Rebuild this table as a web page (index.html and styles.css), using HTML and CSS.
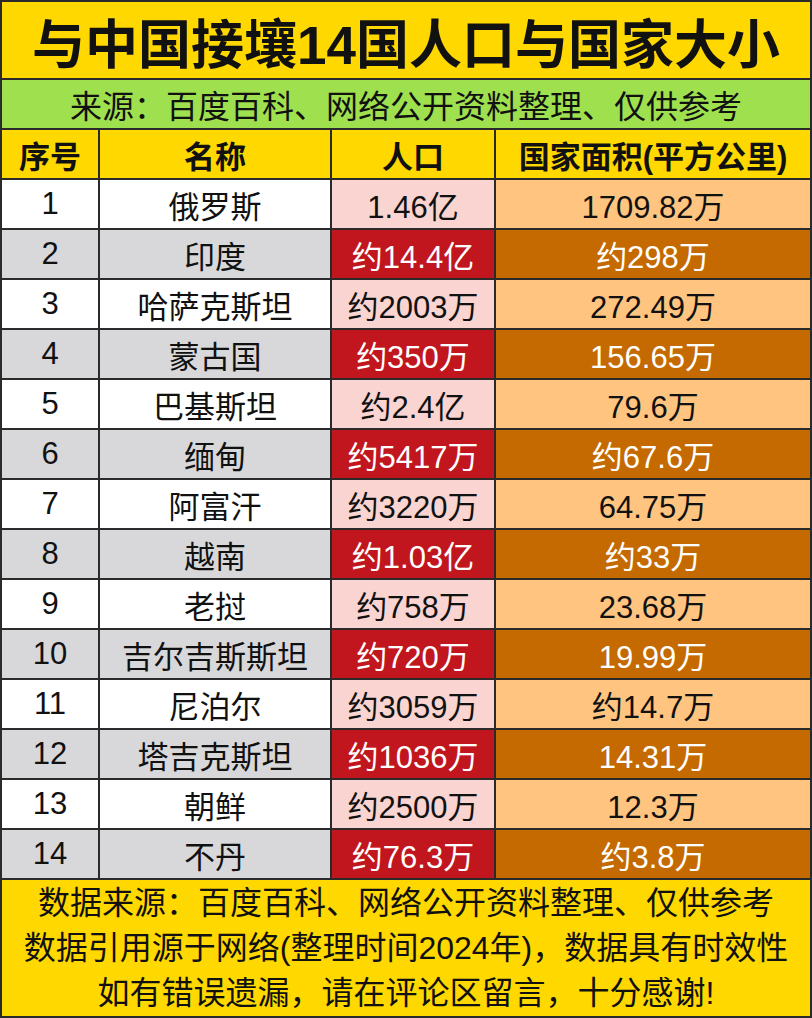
FILE: index.html
```html
<!DOCTYPE html>
<html lang="zh-CN">
<head>
<meta charset="utf-8">
<title>与中国接壤14国人口与国家大小</title>
<link rel="stylesheet" href="styles.css">
</head>
<body>
<div class="sheet">
  <div class="title">与中国接壤14国人口与国家大小</div>
  <div class="source">来源：百度百科、网络公开资料整理、仅供参考</div>
  <div class="table">
    <div class="cell head">序号</div>
    <div class="cell head">名称</div>
    <div class="cell head">人口</div>
    <div class="cell head">国家面积(平方公里)</div>

    <div class="cell no">1</div><div class="cell name">俄罗斯</div><div class="cell pop">1.46亿</div><div class="cell area">1709.82万</div>
    <div class="cell no alt">2</div><div class="cell name alt">印度</div><div class="cell pop alt">约14.4亿</div><div class="cell area alt">约298万</div>
    <div class="cell no">3</div><div class="cell name">哈萨克斯坦</div><div class="cell pop">约2003万</div><div class="cell area">272.49万</div>
    <div class="cell no alt">4</div><div class="cell name alt">蒙古国</div><div class="cell pop alt">约350万</div><div class="cell area alt">156.65万</div>
    <div class="cell no">5</div><div class="cell name">巴基斯坦</div><div class="cell pop">约2.4亿</div><div class="cell area">79.6万</div>
    <div class="cell no alt">6</div><div class="cell name alt">缅甸</div><div class="cell pop alt">约5417万</div><div class="cell area alt">约67.6万</div>
    <div class="cell no">7</div><div class="cell name">阿富汗</div><div class="cell pop">约3220万</div><div class="cell area">64.75万</div>
    <div class="cell no alt">8</div><div class="cell name alt">越南</div><div class="cell pop alt">约1.03亿</div><div class="cell area alt">约33万</div>
    <div class="cell no">9</div><div class="cell name">老挝</div><div class="cell pop">约758万</div><div class="cell area">23.68万</div>
    <div class="cell no alt">10</div><div class="cell name alt">吉尔吉斯斯坦</div><div class="cell pop alt">约720万</div><div class="cell area alt">19.99万</div>
    <div class="cell no">11</div><div class="cell name">尼泊尔</div><div class="cell pop">约3059万</div><div class="cell area">约14.7万</div>
    <div class="cell no alt">12</div><div class="cell name alt">塔吉克斯坦</div><div class="cell pop alt">约1036万</div><div class="cell area alt">14.31万</div>
    <div class="cell no">13</div><div class="cell name">朝鲜</div><div class="cell pop">约2500万</div><div class="cell area">12.3万</div>
    <div class="cell no alt">14</div><div class="cell name alt">不丹</div><div class="cell pop alt">约76.3万</div><div class="cell area alt">约3.8万</div>
  </div>
  <div class="footer">
    <p>数据来源：百度百科、网络公开资料整理、仅供参考</p>
    <p>数据引用源于网络(整理时间2024年)，数据具有时效性</p>
    <p>如有错误遗漏，请在评论区留言，十分感谢!</p>
  </div>
</div>
</body>
</html>
```
FILE: styles.css
```css
html, body {
  margin: 0;
  padding: 0;
  background: #2a2a2a;
}

.sheet {
  width: 812px;
  height: 1018px;
  box-sizing: border-box;
  padding: 2px;
  background: #2a2a2a;
  display: flex;
  flex-direction: column;
  gap: 2px;
  font-family: "Liberation Sans", "Noto Sans CJK SC", sans-serif;
  color: #111;
}

.title {
  height: 76px;
  background: #ffd800;
  display: flex;
  align-items: center;
  justify-content: center;
  font-size: 53px;
  font-weight: 700;
  padding-top: 2px;
  box-sizing: border-box;
}

.source {
  height: 48px;
  background: #9fe04f;
  display: flex;
  align-items: center;
  justify-content: center;
  font-size: 32px;
}

.table {
  display: grid;
  grid-template-columns: 96px 230px 162px 314px;
  grid-auto-rows: 48px;
  gap: 2px;
}

.cell {
  display: flex;
  align-items: center;
  justify-content: center;
  font-size: 31px;
  white-space: nowrap;
}

.head {
  background: #ffd800;
  font-weight: 700;
}

.no, .name { background: #ffffff; }
.pop { background: #f9d4d0; }
.area { background: #ffc47f; }

.no.alt, .name.alt { background: #d8d8da; }
.pop.alt { background: #c1161e; color: #fff; }
.area.alt { background: #c46a00; color: #fff; }

.footer {
  flex: 1;
  background: #ffd800;
  display: flex;
  flex-direction: column;
  justify-content: center;
  align-items: center;
  font-size: 32px;
  line-height: 45px;
}

.footer p {
  margin: 0;
  white-space: nowrap;
}
```
